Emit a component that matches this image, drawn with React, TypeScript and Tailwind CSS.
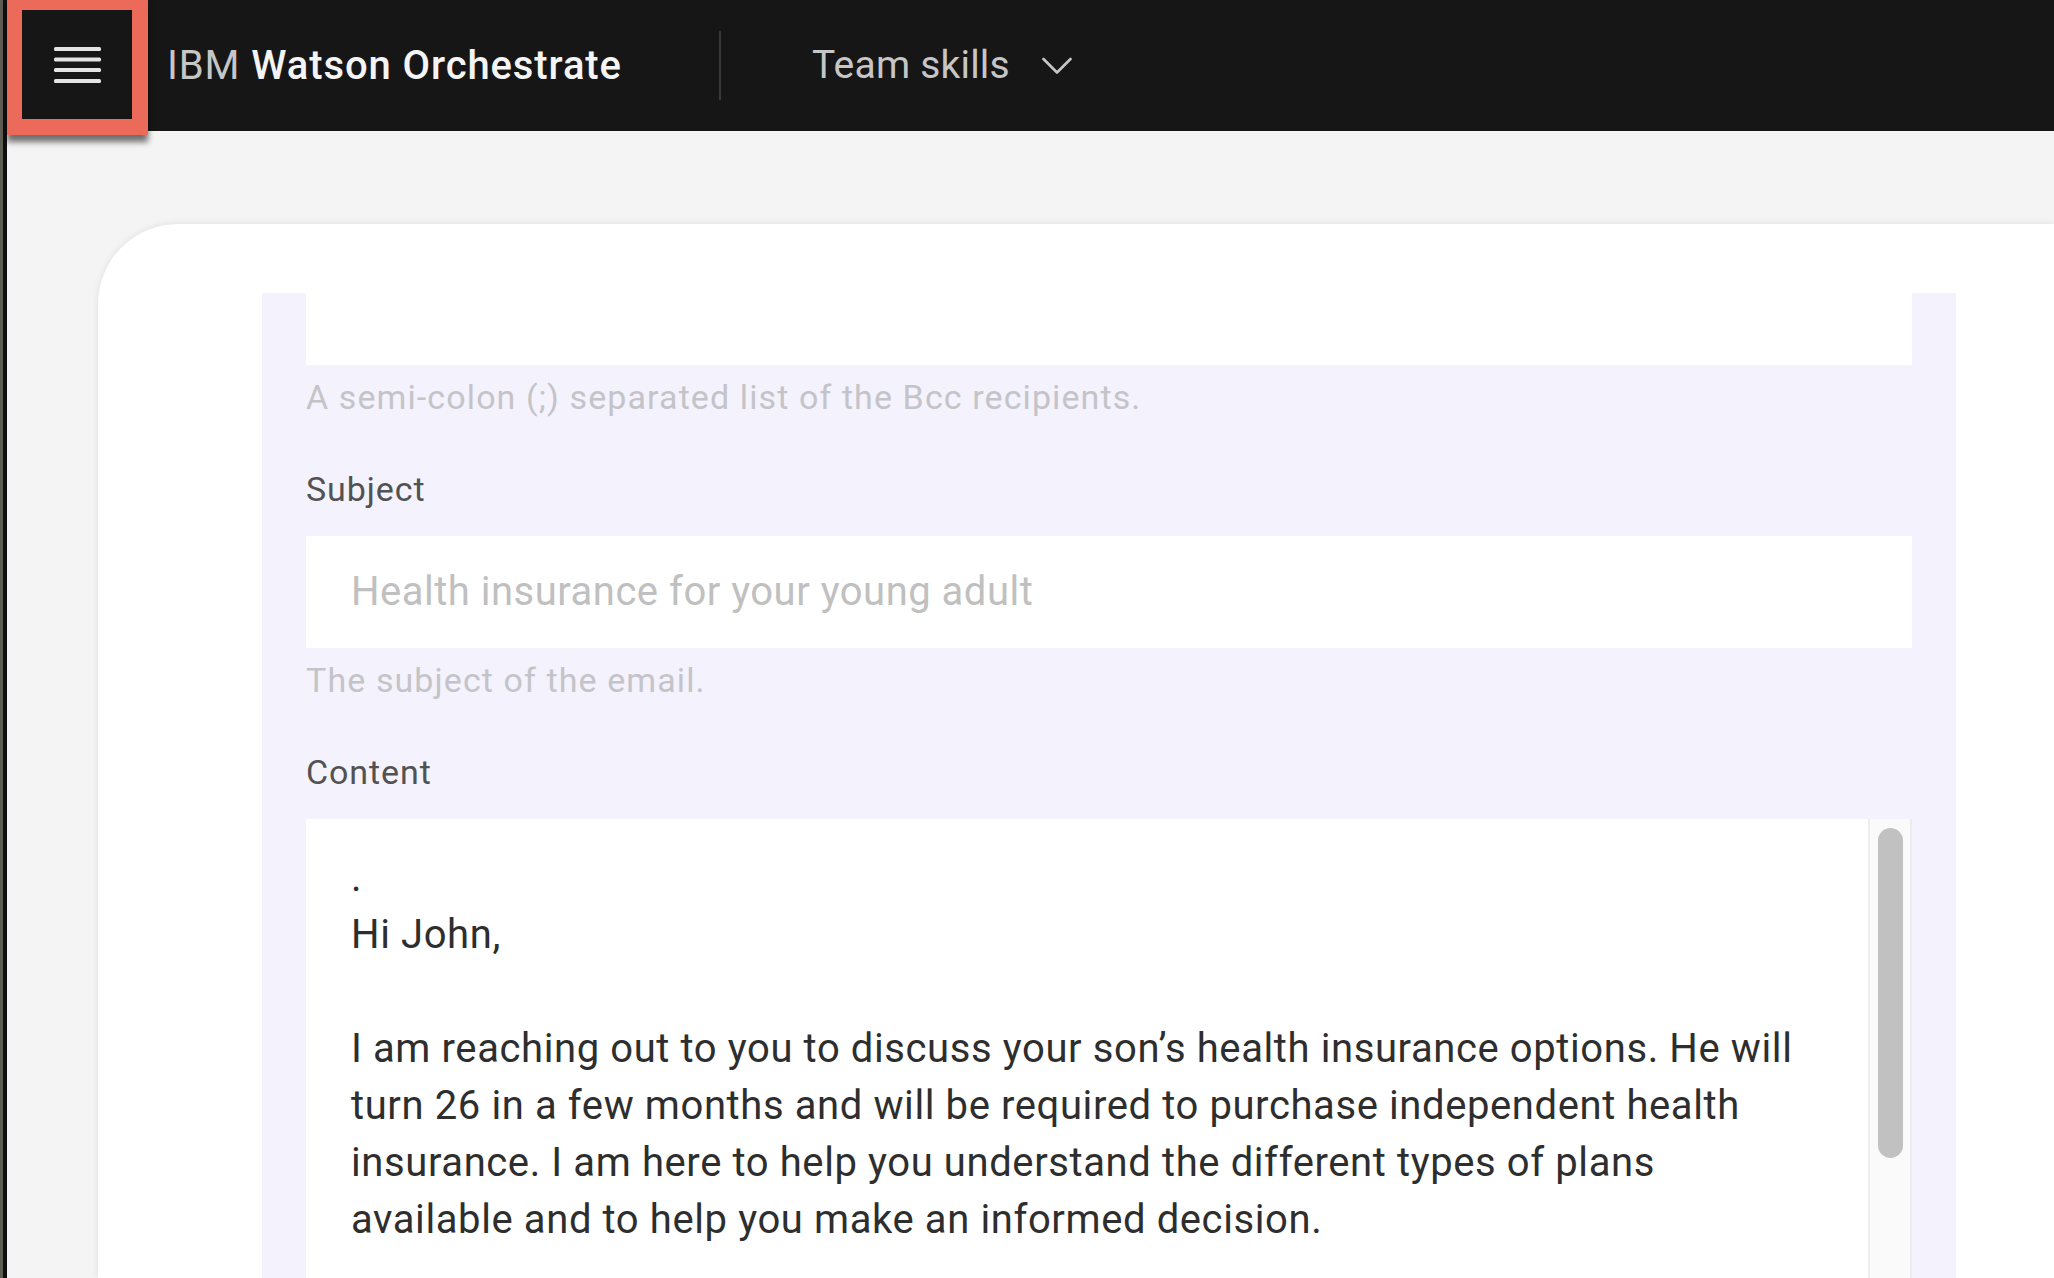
import React from "react";

const contentLines = [
  ".",
  "Hi John,",
  "",
  "I am reaching out to you to discuss your son’s health insurance options. He will",
  "turn 26 in a few months and will be required to purchase independent health",
  "insurance. I am here to help you understand the different types of plans",
  "available and to help you make an informed decision.",
];

function MenuIcon() {
  return (
    <svg width="47" height="36" viewBox="0 0 47 36" fill="#e4e4e4">
      <rect x="0" y="0" width="47" height="4" rx="1.5" />
      <rect x="0" y="10.5" width="47" height="4" rx="1.5" />
      <rect x="0" y="21" width="47" height="4" rx="1.5" />
      <rect x="0" y="32" width="47" height="4" rx="1.5" />
    </svg>
  );
}

function Chevron() {
  return (
    <svg width="30" height="18" viewBox="0 0 30 18" fill="none">
      <polyline
        points="1.5,2 15,15.5 28.5,2"
        stroke="#c6c6c6"
        strokeWidth="2.6"
        strokeLinecap="round"
        strokeLinejoin="round"
      />
    </svg>
  );
}

export default function App() {
  return (
    <div className="flex h-screen w-full overflow-hidden bg-[#f4f4f4] font-[family-name:Roboto,sans-serif]">
      <div className="flex w-[7px] shrink-0">
        <div className="w-[3px] bg-[#5e5d52]" />
        <div className="w-[4px] bg-[#101010]" />
      </div>
      <div className="flex min-w-0 flex-1 flex-col">
        <header className="relative z-10 flex h-[131px] shrink-0 items-center bg-[#161616]">
          <button className="flex h-[135px] w-[141px] shrink-0 items-center justify-center self-start border-t-[10px] border-r-[16px] border-b-[16px] border-l-[15px] border-[#ec6a5a] bg-[#161616] shadow-[0_7px_6px_rgba(0,0,0,0.55)]">
            <MenuIcon />
          </button>
          <div className="ml-[19px] w-[552px] shrink-0 whitespace-nowrap text-[40px] leading-none tracking-[0.9px]">
            <span className="text-[#c6c6c6]">IBM</span>{" "}
            <span className="font-medium text-[#f4f4f4]">Watson Orchestrate</span>
          </div>
          <div className="h-[69px] w-[2px] shrink-0 bg-[#393939]" />
          <div className="ml-[91px] w-[230px] shrink-0 whitespace-nowrap text-[39px] leading-none tracking-[0.2px] text-[#c6c6c6]">
            Team skills
          </div>
          <Chevron />
        </header>
        <main className="flex min-h-0 flex-1 pl-[91px] pt-[93px]">
          <div className="flex min-h-0 flex-1 rounded-tl-[80px] bg-white pl-[164px] pt-[69px] shadow-[0_0_7px_rgba(0,0,0,0.09)]">
            <div className="flex w-[1694px] shrink-0 flex-col overflow-hidden bg-[#f4f2fd] px-[44px]">
              <div className="h-[72px] shrink-0 bg-white" />
              <div className="mt-[9px] text-[34px] leading-[46px] tracking-[1.1px] text-[#c4c4c8]">
                A semi-colon (;) separated list of the Bcc recipients.
              </div>

              <div className="mt-[46px] text-[34px] leading-[46px] tracking-[0.9px] text-[#525252]">
                Subject
              </div>
              <div className="mt-[24px] flex h-[112px] shrink-0 items-center bg-white pl-[45px] text-[40px] tracking-[0.5px] text-[#c0c0c0]">
                Health insurance for your young adult
              </div>
              <div className="mt-[9px] text-[34px] leading-[46px] tracking-[1.1px] text-[#c4c4c8]">
                The subject of the email.
              </div>

              <div className="mt-[46px] text-[34px] leading-[46px] tracking-[0.9px] text-[#525252]">
                Content
              </div>
              <div className="mt-[24px] flex min-h-0 flex-1 bg-white">
                <div className="min-w-0 flex-1 overflow-hidden pl-[45px] pt-[30px] text-[40px] leading-[57px] tracking-[0.6px] text-[#2e2e2e]">
                  {contentLines.map((l, i) => (
                    <div key={i} className="h-[57px] whitespace-nowrap">
                      {l === "" ? "\u00a0" : l}
                    </div>
                  ))}
                </div>
                <div className="flex w-[44px] shrink-0 justify-center border-x-2 border-[#ececec] bg-[#fafafa] pt-[9px]">
                  <div className="h-[330px] w-[25px] rounded-full bg-[#c1c1c1]" />
                </div>
              </div>
            </div>
          </div>
        </main>
      </div>
    </div>
  );
}
